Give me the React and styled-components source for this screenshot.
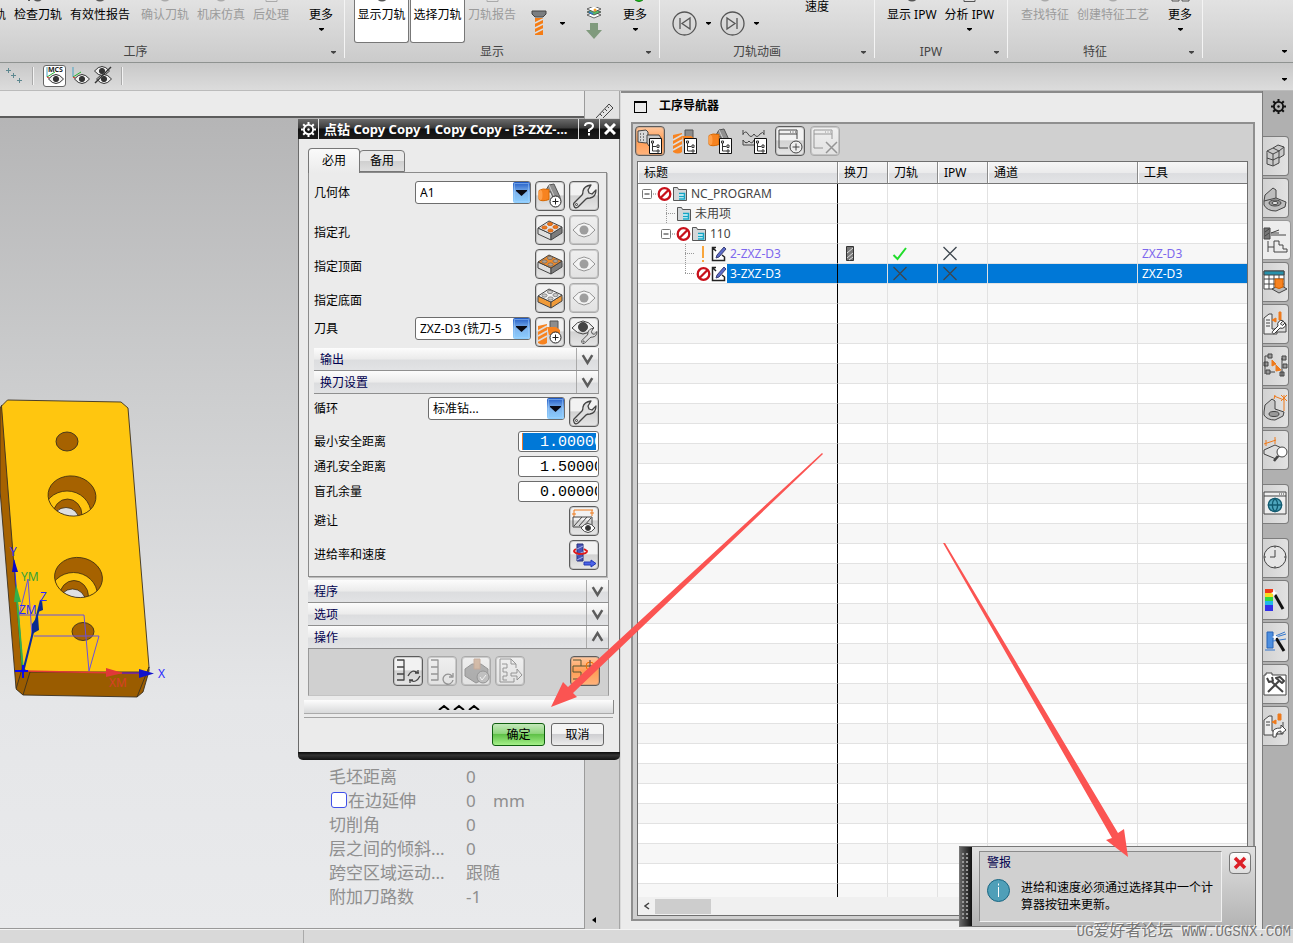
import React from "react";
import styled, { createGlobalStyle, css } from "styled-components";
import { Wrench, Globe } from "lucide-react";

const GlobalStyle = createGlobalStyle`
	* {
		box-sizing: border-box;
	}
	body {
		margin: 0;
		background: #d9d9d9;
		color: #000;
		font-family: "Noto Sans", "Noto Sans CJK SC", sans-serif;
		font-size: 12px;
		line-height: 16px;
	}
	button, input, select {
		font: inherit;
		color: inherit;
		margin: 0;
		padding: 0;
	}
	svg {
		display: block;
		flex: none;
	}
`;

const Page = styled.div`
	position: relative;
	display: flex;
	flex-direction: column;
	height: 100vh;
	overflow: hidden;
`;

/* ---------- ribbon ---------- */

const Ribbon = styled.header`
	display: flex;
	flex: none;
	height: 63px;
	background: linear-gradient(#e2e2e2, #cbcbcb);
	border-bottom: 1px solid #8f9391;
`;

const RibbonGroup = styled.section`
	position: relative;
	display: flex;
	flex-direction: column;
	justify-content: space-between;
	flex: none;
	width: ${(p) => p.$width}px;
	height: 58px;
	padding-left: ${(p) => p.$pad || 0}px;
	border-right: 1px solid #f4f4f4;
`;

const Commands = styled.div`
	display: flex;
	gap: ${(p) => p.$gap || 8}px;
	height: 42px;
`;

const Command = styled.button`
	display: flex;
	flex-direction: column;
	align-items: center;
	flex: none;
	border: 0;
	background: none;
	white-space: nowrap;
	color: ${(p) => (p.disabled ? "#9b9b9b" : "#000")};
	margin-left: ${(p) => p.$space || 0}px;

	svg:first-child {
		margin-bottom: 2px;
	}
	span + svg {
		margin-top: 5px;
	}
	${(p) =>
		p.$pressed &&
		css`
			width: 55px;
			height: 43px;
			background: #fff;
			border: 1px solid #777;
			border-top: 0;
			border-radius: 0 0 3px 3px;
		`}
`;

const GroupTitle = styled.div`
	height: 16px;
	margin: 0 0 -2px -${(p) => p.$pad || 0}px;
	padding-right: ${(p) => p.$end || 20}px;
	color: #444;
	line-height: 16px;
	text-align: center;
`;

const Launcher = styled.button`
	position: absolute;
	right: 8px;
	bottom: 4px;
	border: 0;
	background: none;
`;

const RibbonEnd = styled.div`
	flex: 1;
	display: flex;
	justify-content: flex-end;
	align-items: flex-end;
	padding: 0 6px 9px 0;
`;

const PlainButton = styled.button`
	display: flex;
	align-items: center;
	justify-content: center;
	border: 0;
	background: none;
`;

const Playback = styled.div`
	display: flex;
	align-items: center;
	gap: ${(p) => p.$gap}px;
	padding: 4px 0 0 ${(p) => p.$start || 0}px;
	height: 42px;
`;

const Stack = styled.div`
	display: flex;
	flex-direction: column;
	align-items: center;
	gap: 4px;
	height: ${(p) => p.$height || 32}px;
	margin-left: ${(p) => p.$space}px;
`;

const QuickBar = styled.nav`
	display: flex;
	align-items: center;
	height: 28px;
	flex: none;
	gap: 5px;
	padding: 0 6px 2px;
	background: linear-gradient(#c8c8c8, #dcdcdc);
	border-bottom: 1px solid #bbb;
`;

const QuickDivider = styled.span`
	width: 2px;
	height: 18px;
	margin: 0 4px;
	background: linear-gradient(90deg, #aaa 50%, #f2f2f2 50%);
`;

const QuickButton = styled(PlainButton)`
	width: ${(p) => (p.$pressed ? 23 : 18)}px;
	height: 22px;
	border: ${(p) => (p.$pressed ? "1px solid #666" : "0")};
	border-radius: 3px;
	background: ${(p) => (p.$pressed ? "#fff" : "none")};
`;

const QuickMore = styled(PlainButton)`
	margin-left: auto;
	padding-top: 8px;
`;

/* ---------- work area ---------- */

const Work = styled.main`
	display: grid;
	grid-template-columns: minmax(0, 620fr) minmax(0, 642fr) 31px;
	flex: 1;
	min-height: 0;
`;

const Left = styled.section`
	position: relative;
	display: flex;
	min-width: 0;
	min-height: 0;
`;

const CanvasColumn = styled.div`
	display: flex;
	flex-direction: column;
	flex: 1;
	min-width: 0;
	border-right: 1px solid #9b9b9b;
`;

const CanvasHeader = styled.div`
	height: 27px;
	flex: none;
	background: #ebebeb;
	border-bottom: 2px solid #5c5c5c;
`;

const Canvas = styled.div`
	display: flex;
	flex-direction: column;
	flex: 1;
	min-height: 0;
	padding-top: 272px;
	background: linear-gradient(#b5b5b6 0%, #cccdce 33%, #e5e6e8 72%, #e9eaec 100%);
	border-bottom: 1px solid #999;
`;

const Hud = styled.div`
	display: grid;
	grid-template-columns: 137px 27px 1fr;
	grid-auto-rows: 24px;
	margin-top: auto;
	padding: 0 0 19px 329px;
	font-size: 17px;
	line-height: 24px;
	color: #8f8f8f;
	white-space: nowrap;
`;

const HudCheck = styled.label`
	display: flex;
	align-items: center;
	gap: 1px;

	input {
		appearance: none;
		width: 16px;
		height: 16px;
		margin: 0 0 3px 2px;
		background: #fff;
		border: 1px solid #4050e8;
		border-radius: 3px;
	}
`;

const SideStrip = styled.div`
	display: flex;
	flex-direction: column;
	justify-content: space-between;
	width: 35px;
	background: #d0d0d0;
	border-right: 1px solid #a5a5a5;
`;

const RulerCorner = styled.div`
	display: flex;
	justify-content: center;
	align-items: flex-end;
	height: 27px;
	background: #e2e2e2;
	padding-left: 6px;
`;

const StripArrow = styled(PlainButton)`
	width: 18px;
	height: 19px;
`;

const StatusBar = styled.footer`
	display: flex;
	flex: none;
	height: 14px;
	background: #d9d9d9;
	border-top: 1px solid #f3f3f3;

	span {
		width: 304px;
		border-right: 1px solid #aaa;
	}
`;

/* ---------- dialog ---------- */

const Dialog = styled.section`
	position: absolute;
	top: 28px;
	right: 0;
	width: 322px;
	background: #ebebeb;
	border: 1px solid #6b6b6b;
	border-width: 0 1px;
	border-radius: 0 0 5px 5px;
`;

const TitleBar = styled.div`
	display: flex;
	height: 20px;
	margin: 0 -1px;
	color: #fff;
	background: linear-gradient(#6a6a6a, #3c3c3c 45%, #101010 50%, #1c1c1c);

	h2 {
		flex: 1;
		margin: 0;
		padding-left: 5px;
		font-size: 13px;
		line-height: 20px;
		white-space: nowrap;
		overflow: hidden;
	}
`;

const TitleButton = styled(PlainButton)`
	width: 21px;
	border-right: ${(p) => (p.$left ? "1px solid #ddd" : "0")};
	border-left: ${(p) => (p.$left ? "0" : "1px solid #ddd")};
`;

const DialogBody = styled.div`
	padding: 9px 10px 6px 9px;
`;

const Tabs = styled.div`
	display: flex;
	align-items: flex-end;
	height: 24px;
`;

const Tab = styled.button`
	width: ${(p) => (p.$active ? 52 : 46)}px;
	height: ${(p) => (p.$active ? 25 : 22)}px;
	margin-bottom: ${(p) => (p.$active ? -1 : 0)}px;
	margin-left: ${(p) => (p.$active ? 0 : -1)}px;
	position: relative;
	z-index: ${(p) => (p.$active ? 1 : 0)};
	border: 1px solid #777;
	border-bottom: ${(p) => (p.$active ? "0" : "1px solid #777")};
	border-radius: 4px 4px 0 0;
	background: ${(p) =>
		p.$active ? "linear-gradient(#fafafa, #ebebeb)" : "linear-gradient(#e9e9e9 50%, #cfcfcf 50%, #dedede)"};
	line-height: 20px;
`;

const TabPanel = styled.div`
	margin-right: 2px;
	padding: 8px 7px 6px 5px;
	border: 1px solid #8b8b8b;
	box-shadow: 1px 1px 0 #bbb;
`;

const Rows = styled.div`
	display: grid;
	gap: 4px;
	margin-top: ${(p) => p.$top || 0}px;
`;

const Row = styled.div`
	display: flex;
	align-items: flex-start;
	gap: 4px;

	> label, > span {
		flex: 1;
		padding-top: ${(p) => (p.$low ? 10 : p.$mid ? 7 : 4)}px;
	}
	> input {
		flex: none;
	}
`;

const DistanceRow = styled(Row)`
	> label {
		padding-top: 3px;
	}
`;

const ToolButton = styled.button`
	display: flex;
	flex: none;
	width: 30px;
	height: 30px;
	overflow: hidden;
	border: 1px solid ${(p) => (p.disabled ? "#aaa" : "#5c5c5c")};
	border-radius: 4px;
	background: ${(p) =>
		p.$hot
			? "linear-gradient(#ffc79d, #ff9d55 50%, #ffb37c)"
			: p.disabled
			? "linear-gradient(#efefef, #e2e2e2)"
			: "linear-gradient(#f2f2f2 45%, #d2d2d2 50%, #e6e6e6)"};
	box-shadow: inset 0 0 0 1px rgba(120, 120, 120, 0.3);

	svg {
		opacity: ${(p) => (p.disabled ? 0.5 : 1)};
	}
`;

const ComboBox = styled.div`
	position: relative;
	width: ${(p) => p.$width}px;
	height: 23px;

	select {
		appearance: none;
		width: 100%;
		height: 23px;
		padding: 0 20px 0 4px;
		background: #fff;
		border: 1px solid #6d6d6d;
		border-radius: 3px;
	}
	svg {
		position: absolute;
		top: 1px;
		right: 1px;
		pointer-events: none;
	}
`;

const NumberField = styled.input`
	width: 81px;
	height: 21px;
	padding: 2px 1px 0 21px;
	border: 1px solid #6d6d6d;
	border-radius: 3px;
	font-family: "Liberation Mono", monospace;
	font-size: 15px;
	line-height: 17px;
	color: ${(p) => (p.$selected ? "#fff" : "#000")};
	background: ${(p) =>
		p.$selected
			? "linear-gradient(90deg, #e87a30 1px, #0078d7 1px) 3px 1px / 74px 17px no-repeat #fff"
			: "#fff"};
`;

const Bar = styled.button`
	display: flex;
	align-items: center;
	width: 100%;
	height: 23px;
	border: 0;
	border-bottom: 1px solid #8f8f8f;
	border-right: 1px solid #999;
	background: linear-gradient(#fcfcfc, #ebebeb 50%, #dcdddf 55%, #e2e3e5);
	color: #00004e;
	text-align: left;

	span {
		flex: 1;
		padding: 2px 0 0 6px;
	}
	svg {
		border-left: 1px solid #aaa;
	}
`;

const BarList = styled.div`
	margin-top: ${(p) => p.$top}px;
`;

const Actions = styled.div`
	display: flex;
	gap: 4px;
	height: 47px;
	padding: 7px 8px 0 84px;
	background: #d0d0d0;
	border: 1px solid #9a9a9a;
	border-top: 0;
	border-bottom-color: #c4c4c4;

	button:last-child {
		margin-left: auto;
	}
`;

const Collapse = styled.button`
	display: flex;
	justify-content: center;
	align-items: center;
	width: calc(100% + 9px);
	height: 14px;
	margin: 4px -5px 3px -4px;
	border: 0;
	border-bottom: 1px solid #aaa;
	border-right: 1px solid #888;
	background: linear-gradient(#fdfdfd, #d8d9da);
`;

const Footer = styled.div`
	display: flex;
	justify-content: flex-end;
	gap: 6px;
	padding: 5px 9px 0 0;
	border-top: 1px solid #a2a2a2;
	margin: 0 -4px 0 -4px;
`;

const PushButton = styled.button`
	width: 53px;
	height: 23px;
	border: 1px solid ${(p) => (p.$primary ? "#0f5e0f" : "#666")};
	border-radius: 3px;
	background: ${(p) =>
		p.$primary
			? "linear-gradient(#c4e8bb, #8fd67d 45%, #5fc148 50%, #a5f089)"
			: "linear-gradient(#f4f4f4 45%, #cfcfd2 50%, #ececec)"};
`;

const DialogFoot = styled.div`
	height: 8px;
	margin: 0 -1px;
	background: linear-gradient(#0a0a0a, #333 40%, #111);
	border-radius: 0 0 5px 5px;
`;

/* ---------- operation navigator ---------- */

const Navigator = styled.section`
	display: flex;
	flex-direction: column;
	min-width: 0;
	min-height: 0;
	padding: 0 7px 8px 10px;
	margin-left: 1px;
	background: #ebebeb;
	border-top: 2px solid #8a8a8a;
`;

const NavHeader = styled.div`
	display: flex;
	align-items: center;
	gap: 12px;
	height: 29px;
	padding: 0 0 3px 3px;

	h2 {
		margin: 0;
		font-size: 12px;
		line-height: 16px;
	}
`;

const PinBox = styled.button`
	width: 13px;
	height: 12px;
	border: 1px solid #000;
	border-top-width: 2px;
	background: none;
	margin-top: 2px;
`;

const NavBody = styled.div`
	display: flex;
	flex-direction: column;
	flex: 1;
	min-height: 0;
	padding: 2px 5px 3px 4px;
	background: #d0d0d0;
	border: 2px solid #8f8f8f;
`;

const NavTools = styled.div`
	display: flex;
	align-items: center;
	height: 30px;
	margin: 0 0 5px -2px;
	gap: 5px;
`;

const FlatTool = styled(PlainButton)`
	width: 30px;
	height: 30px;
`;

const Sheet = styled.div`
	display: flex;
	flex-direction: column;
	flex: 1;
	min-height: 0;
	background: #fff;
	border: 1px solid #6f6f6f;
`;

const SheetScroll = styled.div`
	flex: 1;
	min-height: 0;
	overflow: hidden;
`;

const Table = styled.table`
	width: 100%;
	table-layout: fixed;
	border-collapse: separate;
	border-spacing: 0;
	white-space: nowrap;

	th {
		height: 22px;
		padding: 1px 0 0 6px;
		font-weight: 400;
		text-align: left;
		background: linear-gradient(#f6f6f6, #ebebec 50%, #dcdde0 55%, #e3e4e6);
		border-right: 1px solid #8a8a8a;
		border-bottom: 1px solid #777;
		box-shadow: inset 1px 0 0 #fff;
	}
	td {
		height: 20px;
		padding: 0;
		border-right: 1px solid #e2e2e2;
		border-bottom: 1px solid #e2e2e2;
		overflow: hidden;
	}
	td:first-child {
		border-right-color: #000;
	}
	th:last-child, td:last-child {
		border-right: 0;
	}
`;

const Line = styled.tr`
	background: ${(p) => (p.$odd ? "#f7f7f7" : "#fff")};
	color: ${(p) => (p.$selected ? "#fff" : "#7d68ee")};

	td:not(:first-child) {
		padding-left: 4px;
		background: ${(p) => (p.$selected ? "#0078d7" : "transparent")};
	}
`;

const TreeCell = styled.div`
	display: flex;
	align-items: center;
	height: 19px;
	padding-left: ${(p) => p.$indent || 0}px;
`;

const TreeText = styled.span`
	flex: 1;
	padding-left: 3px;
	line-height: 19px;
	color: ${(p) => (p.$selected ? "#fff" : p.$done ? "#7d68ee" : "#444")};
	background: ${(p) => (p.$selected ? "#0078d7" : "transparent")};
`;

const ScrollTrack = styled.div`
	display: flex;
	align-items: center;
	height: 18px;
	background: #f0f0f0;

	button {
		width: 17px;
		height: 17px;
	}
	span {
		width: 56px;
		height: 15px;
		background: #cdcdcd;
	}
`;

/* ---------- resource rail ---------- */

const Rail = styled.nav`
	display: flex;
	flex-direction: column;
	gap: 2px;
	background: #b0b0b0;
	border-left: 1px solid #7b7b7b;
`;

const RailGear = styled(PlainButton)`
	height: 31px;
	margin-bottom: 12px;
`;

const RailTab = styled.button`
	display: flex;
	align-items: center;
	flex: none;
	width: ${(p) => (p.$active ? 28 : 26)}px;
	height: 40px;
	margin-top: ${(p) => p.$space || 0}px;
	border: 1px solid ${(p) => (p.$active ? "#999" : "#7d7d7d")};
	border-left: 0;
	border-radius: 0 4px 4px 0;
	background: ${(p) => (p.$active ? "#ededed" : "linear-gradient(90deg, #d2d2d2, #e2e2e2)")};
`;

/* ---------- alert ---------- */

const Alert = styled.aside`
	position: absolute;
	right: 37px;
	bottom: 16px;
	display: flex;
	width: 297px;
	height: 81px;
	background: linear-gradient(#e0e0e0, #b4b4b4);
	border: 1px solid #777;
`;

const AlertGrip = styled.div`
	width: 12px;
	background: linear-gradient(90deg, #666, #111);

	svg {
		margin: 6px 0 0 2px;
	}
`;

const AlertBox = styled.div`
	flex: 1;
	margin: 4px 7px;
	padding: 3px 7px 0;
	background: #d0d0d0;
	border: 1px solid #f0f0f0;
	border-top-color: #8a8a8a;
	border-left-color: #8a8a8a;

	h3 {
		margin: 0 0 8px;
		font-size: 12px;
		font-weight: 400;
		line-height: 16px;
		color: #00004e;
	}
	div {
		display: flex;
		gap: 11px;
	}
	p {
		margin: 0 -6px 0 0;
		line-height: 17px;
	}
`;

const AlertClose = styled(PlainButton)`
	width: 22px;
	height: 22px;
	margin: 5px 4px 0 0;
	border: 1px solid #777;
	border-radius: 4px;
	background: linear-gradient(#fff, #ddd);
`;

const Watermark = styled.div`
	position: absolute;
	right: 2px;
	bottom: 1px;
	display: flex;
	align-items: baseline;
	font-family: "Liberation Mono", "Noto Sans CJK SC", monospace;
	font-size: 14px;
	line-height: 20px;
	color: #777;
	text-shadow: -1px -1px 0 #f5f5f5;
	white-space: pre;
	pointer-events: none;

	b {
		font-size: 16px;
		font-weight: 400;
	}
`;

const Annotations = styled.svg`
	position: absolute;
	inset: 0;
	width: 100%;
	height: 100%;
	pointer-events: none;
`;

/* ---------- drawings ---------- */

const Caret = ({ color = "#000" }) => (
	<svg width="5" height="3" viewBox="0 0 5 3">
		<path d="M0 0h5v1L2.500 3 0 1z" fill={color} />
	</svg>
);

const Gear = ({ color }) => (
	<svg width="15" height="15" viewBox="0 0 15 15" fill="none" stroke={color}>
		<circle cx="7.500" cy="7.500" r="4.600" strokeWidth="1.800" />
		<path
			d="M7.500 0v3M7.500 12v3M0 7.500h3M12 7.500h3M2.200 2.200l2 2M10.800 10.800l2 2M12.800 2.200l-2 2M4.200 10.800l-2 2"
			strokeWidth="2"
		/>
		<circle cx="7.500" cy="7.500" r="1.200" fill={color} stroke="none" />
	</svg>
);

const Sliver = ({ kind, color = "#555" }) => (
	<svg width="30" height="5" viewBox="0 0 30 5" fill="none" stroke={color}>
		{kind === "box" && <path d="M10 0v1.500h11V0" />}
		{kind === "round" && <path d="M10 -2q5 5 10 0" strokeWidth="2" />}
		{kind === "loop" && <path d="M5 0h2M10 -2q5 5 9 0" strokeWidth="2" />}
		{kind === "green" && <path d="M13 -2q6 7 12 0z" fill="#1fc51f" stroke="#137a13" />}
		{kind === "cubes" && <path d="M7 0v1h7V0M17 0v1h7V0" />}
	</svg>
);

const Step = ({ back }) => (
	<svg width="25" height="25" viewBox="0 0 25 25" fill="none" stroke="#555" strokeWidth="1.300">
		<circle cx="12.500" cy="12.500" r="11.500" />
		{back ? <path d="M8 7v11M18 7v11l-8-5.500z" /> : <path d="M17 7v11M7 7v11l8-5.500z" />}
	</svg>
);

const DrillIcon = () => (
	<svg width="16" height="26" viewBox="0 0 16 26">
		<path d="M1 1h14v3l-3 3H4L1 4z" fill="#7a7d80" stroke="#444" />
		<path d="M4 8h8v17H4z" fill="#f57c14" />
		<path d="M4 13l8-4M4 18l8-4M4 23l8-4" stroke="#ddd" strokeWidth="1.500" />
	</svg>
);

const LayersIcon = () => (
	<svg width="16" height="12" viewBox="0 0 16 12" fill="#fff" stroke="#444" strokeWidth="0.800">
		<path d="M1 8l7-3 7 3-7 3z" />
		<path d="M1 5l7-3 7 3-7 3z" fill="#59bd6a" />
		<path d="M1 2l7-3 7 3-7 3z" fill="#fff" />
		<circle cx="9" cy="3" r="1.500" fill="#f7a020" stroke="none" />
		<path d="M3 5l4 2" stroke="#3477cc" strokeWidth="1.500" />
	</svg>
);

const DownIcon = () => (
	<svg width="16" height="16" viewBox="0 0 16 16">
		<path d="M4 0h8v7h4l-8 9-8-9h4z" fill="#809a7d" />
	</svg>
);

const CrossesIcon = () => (
	<svg width="17" height="17" viewBox="0 0 17 17" stroke="#5d8890" strokeWidth="1">
		<path d="M0 3.500h5M2.500 1v5M5 8.500h5M7.500 6v5M11 13.500h5M13.500 11v5" />
	</svg>
);

const EyeShape = ({ x = 0, y = 0, color = "#333" }) => (
	<g transform={`translate(${x} ${y})`} fill="none" stroke={color}>
		<path d="M-7.500 0q7.500 -9 15 0q-7.500 9 -15 0z" fill="#eee" />
		<circle r="2.600" fill={color} />
	</g>
);

const AxisEye = ({ label }) => (
	<svg width="19" height="19" viewBox="0 0 19 19">
		<path d="M2 1v10" stroke="#4aa3c4" />
		<path d="M2 11l8-5" stroke="#26b32e" />
		<path d="M2 11l4 2" stroke="#e02020" />
		{label && (
			<text x="3" y="6" fontSize="7" fontWeight="700" fill="#222">
				MCS
			</text>
		)}
		<EyeShape x={11} y={13} />
	</svg>
);

const HideEye = () => (
	<svg width="18" height="19" viewBox="0 0 18 19">
		<EyeShape x={8} y={5} />
		<EyeShape x={10} y={13} />
		<path d="M1 17L17 1" stroke="#333" strokeWidth="1.500" />
	</svg>
);

const RulerIcon = () => (
	<svg width="18" height="15" viewBox="0 0 18 15" fill="none" stroke="#444">
		<path d="M0 15L13 1l4 4L7 15M4 11l2 2M6.500 8.500l1.500 1.500M9 6l2 2M11.500 3.500l1.500 1.500" />
	</svg>
);

const ComboArrow = () => (
	<svg width="17" height="21" viewBox="0 0 17 21">
		<defs>
			<linearGradient id="combo" x1="0" y1="0" x2="0" y2="1">
				<stop offset="0" stopColor="#1e58c4" />
				<stop offset="0.500" stopColor="#7fb4ee" />
				<stop offset="1" stopColor="#8ccfff" />
			</linearGradient>
		</defs>
		<rect width="17" height="21" rx="2" fill="url(#combo)" />
		<rect x="1.500" y="1.500" width="14" height="18" fill="none" stroke="#a5d2fb" strokeOpacity="0.500" />
		<path d="M3 8h11v1l-5.500 5L3 9z" fill="#0a0a14" />
	</svg>
);

const Chevron = ({ up }) => (
	<svg width="22" height="22" viewBox="0 0 22 22" fill="none" stroke="#5c5c5c" strokeWidth="2.600">
		<path d={up ? "M6 15l5-8 5 8" : "M6 7l5 8 5-8"} />
	</svg>
);

// every toolbar drawing shares the inside of a 30px button
const Glyph = ({ children }) => (
	<svg width="28" height="28" viewBox="1 1 28 28" fill="none" stroke="#444" strokeLinejoin="round">
		{children}
	</svg>
);

const PlusBadge = () => (
	<g stroke="#222">
		<circle cx="20.500" cy="20.500" r="5.500" fill="#fff" />
		<path d="M17.500 20.500h6M20.500 17.500v6" />
	</g>
);

const TreeBadge = () => (
	<g stroke="#333">
		<path d="M14.500 12.500h12v15h-12z" fill="#fff" stroke="#111" />
		<path d="M17.500 17v8h4M17.500 20.500h4M22 19h2v2.500h-2zM22 24h2v2h-2zM16.500 15h2v2h-2z" />
	</g>
);

const GeometryShape = () => (
	<g>
		<path d="M11 9l3-5 5-1 6 13v4h-5l-5-10-2 3z" fill="#8f8f8f" stroke="#555" />
		<path d="M14 4l6 13" stroke="#ccc" />
		<path d="M4 9.500q3-2.500 10-1v10q-7 2.500-10 0z" fill="#f78320" stroke="#d86800" />
		<ellipse cx="5.500" cy="14" rx="2" ry="5" fill="#ffa04a" stroke="none" />
	</g>
);

const ToolShape = () => (
	<g stroke="none">
		<path d="M15 4h8v9h-8z" fill="#8d8d8d" stroke="#555" />
		<path d="M12 10h9l4 3v5H14z" fill="#f78320" />
		<path d="M3 9l9-2v19q-4 3-9 0z" fill="#f78320" />
		<path d="M3 14l9-5M3 19l9-5M3 24l9-5" stroke="#ddd" strokeWidth="1.500" />
	</g>
);

const Block = ({ top, dots, side }) => (
	<Glyph>
		<path d="M3 13v6l13 6v-6z" fill={side || "#dedede"} />
		<path d="M27 12v6l-11 7v-6z" fill={side || "#7c7c7c"} />
		<path d="M3 13l11-7 13 6-11 7z" fill={top} />
		<g fill={dots} stroke={dots === "#f07818" ? "#c95000" : "#666"} strokeWidth="0.700">
			<ellipse cx="15" cy="9" rx="2.600" ry="1.600" />
			<ellipse cx="9.500" cy="12.500" rx="2.600" ry="1.600" />
			<ellipse cx="20.500" cy="12" rx="2.600" ry="1.600" />
			<ellipse cx="15.500" cy="15.500" rx="2.600" ry="1.600" />
		</g>
	</Glyph>
);

const EyeGlyph = () => (
	<Glyph>
		<path d="M4 15q11-14 22 0q-11 14-22 0z" fill="#fff" />
		<circle cx="15" cy="15" r="4.500" fill="#555" stroke="none" />
	</Glyph>
);

const WrenchShape = () => (
	<g>
		<path
			d="M5 22l8-8q1-1 1-4q1-5 8-6l-3 5 1 3 3 1 4-4q0 7-6 8q-3 0-4 1l-8 8q-3 2-4-1q-1-2 0-3z"
			fill="#dedede"
			strokeWidth="1.300"
		/>
		<circle cx="7.500" cy="23.500" r="1" />
	</g>
);

const WrenchGlyph = () => (
	<Glyph>
		<WrenchShape />
	</Glyph>
);

const GeometryGlyph = ({ tree }) => (
	<Glyph>
		<GeometryShape />
		{tree ? <TreeBadge /> : <PlusBadge />}
	</Glyph>
);

const ToolGlyph = ({ tree }) => (
	<Glyph>
		<ToolShape />
		{tree ? <TreeBadge /> : <PlusBadge />}
	</Glyph>
);

const EyeWrenchGlyph = () => (
	<Glyph>
		<path d="M3 11q11-14 22 0q-11 12-22 0z" />
		<circle cx="14" cy="10" r="4.500" fill="#444" />
		<g transform="translate(9.500 8.500) scale(0.680)">
			<WrenchShape />
		</g>
	</Glyph>
);

const AvoidGlyph = () => (
	<Glyph>
		<path d="M5 4h19M5 4v7M23 4v6M3 8h4M21 7h4" stroke="#ee7a1c" />
		<path d="M4 11h19v10H4zM5 20l8-9M10 20l8-9M15 20l7-8" />
		<g transform="translate(19 22)">
			<path d="M-7 0q7-9 14 0q-7 9-14 0z" fill="#fff" />
			<circle r="2.500" fill="#333" />
		</g>
	</Glyph>
);

const FeedGlyph = () => (
	<Glyph>
		<path d="M8 4h6v17H8z" fill="#4854b8" stroke="#26307c" />
		<path d="M8 9l6-3M8 15l6-3M8 20l6-3" stroke="#a9b0ea" />
		<path d="M7 9q-5 3 3 5q8 0 8-3l-3-2" stroke="#e01c1c" strokeWidth="2" />
		<path d="M15 22h7v-2l5 3.500-5 3.500v-2h-7z" fill="#4b63e8" stroke="#2238b4" />
	</Glyph>
);

const GenerateGlyph = ({ single }) => (
	<Glyph>
		<path d="M4 4h7v7H4M4 18h7v-7M4 11h7M4 18h7v6H4" strokeWidth="1.300" />
		{single ? (
			<path d="M26 17v4h-4M25 20a5 5 0 1 0 1 4" strokeWidth="1.300" />
		) : (
			<path d="M15 20q4-8 10-3v-3M26 17h-4M27 20q-4 8-10 4v3M16 24h4" strokeWidth="1.300" />
		)}
	</Glyph>
);

const VerifyGlyph = () => (
	<Glyph>
		<path d="M4 13l7-5h9l7 5v8l-12 6L4 20z" fill="#777" />
		<path d="M13 3h6v10h-6z" fill="#b98a64" stroke="#a07050" />
		<circle cx="22" cy="21" r="6" fill="#999" />
		<path d="M19 21l2 3 4-5" stroke="#fff" />
	</Glyph>
);

const OutputGlyph = () => (
	<Glyph>
		<path d="M5 3h11l5 5v4M5 3v23h14v-4M16 3v5h5" />
		<path d="M7 8h5v4H8v4h4v4H8v4h4M16 17h6v-4l5 6-5 5v-4h-6z" />
	</Glyph>
);

const DisplayGlyph = () => (
	<Glyph>
		<path d="M3 4h8v6H3v6h8v7H3M11 10h16" stroke="#553" />
		<circle cx="20" cy="10" r="4" stroke="#ee7000" />
		<path d="M20 4v12" />
	</Glyph>
);

const ProgramGlyph = () => (
	<Glyph>
		<path d="M3 5l8-1 2 2v10l-2 1-8-1z" fill="#d9d9d9" />
		<path d="M5 8h1M8 8h1M5 11h1M8 11h1M5 14h1M8 14h1" stroke="#222" />
		<path d="M12 9h12l2 3v8H14l-2-3z" fill="#c9c9c9" />
		<TreeBadge />
	</Glyph>
);

const MethodGlyph = () => (
	<Glyph>
		<path d="M3 4v5M24 4v5M3 8q3-4 5 0q3 5 6 0q3 5 6 0q3-3 4 0M3 14v5M3 14q3 5 6 1q3 4 5-1M3 19h11" />
		<TreeBadge />
	</Glyph>
);

const WindowGlyph = ({ remove }) => (
	<Glyph>
		<path d="M13 22H4V4h18v9M4 8h18M15 6h1M17.500 6h1M20 6h1" />
		{remove ? <path d="M16 16l11 11M27 16L16 27" strokeWidth="1.500" /> : <circle cx="21" cy="21" r="6" fill="#eee" />}
		{!remove && <path d="M17.500 21h7M21 17.500v7" />}
	</Glyph>
);

const Forbidden = () => (
	<svg width="15" height="16" viewBox="0 0 15 16" fill="#fff" stroke="#c8101a" strokeWidth="2.300">
		<circle cx="7.500" cy="8" r="5.800" />
		<path d="M3.500 12l8-8" />
	</svg>
);

const Folder = () => (
	<svg width="16" height="16" viewBox="0 0 16 16">
		<path d="M1.500 14.500v-13h4l1 2h8v11z" fill="#d4d7d9" stroke="#555" />
		<path d="M7 7h6v7H7" fill="#e8fbff" />
		<path d="M7 7.500h5.500v5.500H7M7 10.500h5" stroke="#16a5c4" strokeWidth="1.500" fill="none" />
	</svg>
);

const EditIcon = () => (
	<svg width="16" height="17" viewBox="0 0 16 17" fill="none" stroke="#222">
		<path d="M5 2.500H1.500v13h12V12L11 10M1.500 2.500L5 6" fill="#fff" strokeWidth="1.500" />
		<path d="M13 2L6 10l-1 3 3-1 7-8z" fill="#5b6bc8" stroke="#3a3f78" />
	</svg>
);

const Exclaim = () => (
	<svg width="15" height="16" viewBox="0 0 15 16" fill="#f9a63c">
		<path d="M6 0h2v12H6zM6 14h2v2H6z" />
	</svg>
);

const Guide = ({ width, x, half }) => (
	<svg width={width} height="19" viewBox={`0 0 ${width} 19`} stroke="#999" strokeDasharray="1 1">
		<path d={`M${x + 0.5} 0v${half ? 10 : 19}M${x} 9.500h9`} />
	</svg>
);

const Expander = () => (
	<PlainButton aria-label="折叠">
		<svg width="15" height="19" viewBox="0 0 15 19" fill="#fff" stroke="#777">
			<rect x="0.500" y="5.500" width="9" height="9" rx="1" />
			<path d="M2.500 10h5" stroke="#222" />
			<path d="M11 10h4" strokeDasharray="1 1" />
		</svg>
	</PlainButton>
);

const CrossMark = () => (
	<svg width="17" height="17" viewBox="0 0 17 17" stroke="#3d464e" strokeWidth="1.300">
		<path d="M1.500 2l13 13M14.500 2l-13 13" />
	</svg>
);

const CheckMark = () => (
	<svg width="17" height="17" viewBox="0 0 17 17" fill="none" stroke="#21dd2c" strokeWidth="2">
		<path d="M1.500 10l4 4L14 3" />
	</svg>
);

const ToolMark = () => (
	<svg width="17" height="17" viewBox="0 0 17 17">
		<path d="M4.500 1.500h7v14h-7z" fill="#777" stroke="#333" />
		<path d="M5 8l6-5M5 13l6-5M7 15l4-3" stroke="#ddd" />
	</svg>
);

// drawings on the resource tabs
const railArt = {
	assembly: (
		<g fill="#c9c9c9">
			<path d="M4 9l6-3 5-3 6 2v8l-5 3v5l-6 3-6-2z" />
			<path d="M4 9l6 3v12M10 12l6-3 5-4M10 6l6 3v7M4 16l6 2 6-3" />
		</g>
	),
	part: (
		<g fill="#bdbdbd">
			<path d="M1 17l1-6 8-7 3 2v8l10 4-1 5-9 4q-9 0-12-6z" />
			<path d="M1 17l12-3" />
			<ellipse cx="12" cy="19" rx="6" ry="3" fill="#999" />
			<ellipse cx="12" cy="19" rx="3" ry="1.500" fill="#eee" />
		</g>
	),
	operations: (
		<g>
			<path d="M1 2h6v11H1z" fill="#777" />
			<path d="M2 6l4-3M2 10l4-3M8 7l8-3M8 9h15M8 7l8 0M5 15v11M5 21h6M11 26V15h5v4h4v4h4v3z" />
		</g>
	),
	table: (
		<g>
			<path d="M1 3h20v18H1z" fill="#fff" />
			<path d="M1 3h20v4H1z" fill="#2790aa" />
			<path d="M1 11h20M1 16h20M6 7v14M11 7v14M16 7v14" />
			<path d="M9 21l7 4 8-4-7-4z" fill="#bbb" />
			<path d="M12 11h8v8q-4 3-8 0z" fill="#f78320" stroke="#d06000" />
		</g>
	),
	machine: (
		<g>
			<path d="M1 8l5-4h3v15h5v5H1z" fill="#eee" />
			<path d="M3 10h4M3 13h4M3 16h4M10 22h13v-8l-3-3" fill="#ddd" />
			<path d="M9 10l4-2v4zM16 2h2v8h-2z" stroke="#ee7a1c" fill="#ee7a1c" />
			<Wrench x="8" y="9" width="16" height="16" strokeWidth={1.500} color="#333" fill="#fff" />
		</g>
	),
	links: (
		<g fill="#999">
			<path d="M5 2h4v4H5zM3 18h4v4H3zM19 4h4v4h-4zM17 20h4v4h-4zM1 10h4v4H1zM20 12h4v4h-4z" />
			<path d="M5 4H2v18M19 6v18M7 20h5" fill="none" />
			<path d="M9 8l4 4-4 2zM13 13l5 5-5 1z" stroke="#ee7a1c" fill="#ee7a1c" />
		</g>
	),
	measure: (
		<g fill="#c9c9c9">
			<path d="M1 18l1-7 7-6 3 2v8l9 3-1 4-8 4q-8 0-11-5z" />
			<ellipse cx="11" cy="20" rx="5" ry="2.500" fill="#999" />
			<path d="M11 2l10 4M12 1l-1 4M21 1v16M18 1l6 6M24 1l-6 6" stroke="#ee7a1c" fill="none" />
		</g>
	),
	inspect: (
		<g fill="#ddd">
			<path d="M1 14l11-5 11 5-10 9-12-5z" />
			<path d="M1 8l12-4M3 4v6M12 1v7" stroke="#ee7a1c" fill="none" />
			<circle cx="19" cy="16" r="5" fill="#fff" />
			<path d="M15 20l-4 5" strokeWidth="2.500" />
		</g>
	),
	web: (
		<g>
			<path d="M1 2h22v22H1z" fill="#eee" />
			<path d="M1 6h22M16 4h1M18 4h1M20 4h1" />
			<Globe x="4" y="7" width="16" height="16" color="#125b70" fill="#4fa6be" />
		</g>
	),
	history: (
		<g>
			<circle cx="12" cy="13" r="11" fill="#e5e5e5" />
			<path d="M12 6v7H7M12 2v2M12 22v2M1 13h2M21 13h2" />
		</g>
	),
	colors: (
		<g stroke="none">
			<path d="M2 3h8v4H2z" fill="#f03a18" />
			<path d="M2 7h8v4H2z" fill="#f9dc20" />
			<path d="M2 11h8v4H2z" fill="#32d842" />
			<path d="M2 15h8v4H2z" fill="#22b7e8" />
			<path d="M2 19h8v6H2z" fill="#3430e8" />
			<path d="M12 9l8 14" stroke="#111" strokeWidth="3" />
			<path d="M11 3l1 3 3 1-3 1-1 3-1-3-2-1 2-1z" fill="#fff" />
		</g>
	),
	wizard: (
		<g>
			<path d="M4 4h6v16H4z" fill="#4d8fe0" stroke="#2865b8" />
			<path d="M10 10l13-4M10 13l13-2M10 9l12-5M2 22h10" stroke="#3477cc" />
			<path d="M13 10l8 13" stroke="#111" strokeWidth="3" />
			<path d="M12 5l1 3 3 1-3 1-1 3-1-3-2-1 2-1z" fill="#fff" stroke="none" />
		</g>
	),
	tools: (
		<g>
			<path d="M1 5h2V3h6v2h14v20H1z" fill="#fff" />
			<path d="M5 22L16 11M13 8l4-1 4 4-2 2z" strokeWidth="2" />
			<path d="M20 22L9 12M4 8l2 4 4-1-1-4" strokeWidth="2" />
		</g>
	),
	export: (
		<g>
			<path d="M1 8l5-4h3v15h5v4H1z" fill="#eee" />
			<path d="M3 10h4M3 13h4M20 10v12h-7" fill="none" />
			<path d="M9 10l4-2v4zM15 2h3v6h-3z" stroke="#ee7a1c" fill="#ee7a1c" />
			<path d="M10 25v-5q0-4 8-4v-3l5 5-5 4v-3q-5 0-5 6z" fill="#fff" />
		</g>
	),
};

const railTabs = [
	["assembly", "装配导航器"],
	["part", "部件导航器"],
	["operations", "工序导航器"],
	["table", "机床导航器"],
	["machine", "加工特征"],
	["links", "约束导航器"],
	["measure", "测量"],
	["inspect", "检查"],
	["web", "浏览器", 12],
	["history", "历史记录", 12],
	["colors", "系统材料"],
	["wizard", "加工向导"],
	["tools", "角色"],
	["export", "导出"],
];

const Hole = ({ shift, id }) => (
	<g transform={shift} stroke="#3a2a10" strokeWidth="0.800">
		<clipPath id={id}>
			<ellipse cx="72" cy="496" rx="24" ry="20" transform="rotate(8 72 496)" />
		</clipPath>
		<g clipPath={`url(#${id})`}>
			<path d="M40 470h60v50H40z" fill="#a66200" stroke="none" />
			<ellipse cx="67" cy="514" rx="24" ry="23" fill="#ffc60f" />
			<ellipse cx="67.500" cy="515" rx="14.500" ry="16" fill="#a66200" />
			<ellipse cx="66" cy="520" rx="13" ry="12.500" fill="#dfe0e2" />
		</g>
		<ellipse cx="72" cy="496" rx="24" ry="20" transform="rotate(8 72 496)" fill="none" />
	</g>
);

const PartModel = () => (
	<svg width="180" height="320" viewBox="0 390 180 320">
		<g stroke="#3a3020" strokeWidth="0.900">
			<path d="M0 408l2-3 21 264-1 25-6-6L0 490z" fill="#a66200" />
			<path d="M1.500 406l6-6 113.500 2 7 6 21 259-2 6-117-1-8-3z" fill="#ffc60f" />
			<path d="M22 669l8 3h117l2-5v4l-6 21-6 5-114-2-7-6z" fill="#9a5c00" />
			<path d="M30 672l-7 23M147 672l-10 25" />
			<ellipse cx="67" cy="441.500" rx="11" ry="9.500" fill="#a66200" />
			<ellipse cx="83" cy="631.500" rx="11" ry="9" fill="#a66200" />
		</g>
		<Hole id="bore-a" />
		<Hole id="bore-b" shift="translate(6.500 81.500)" />
		<g fill="none" stroke="#6a50e0">
			<path d="M34 636h65l-10 35-5-56H19l9-36 4 57" />
		</g>
		<path d="M23 671L14 560" stroke="#2a2aff" />
		<path d="M23 671L17 600" stroke="#35b04a" strokeWidth="2" />
		<path d="M16 584l5 18h-7z" fill="#35b04a" />
		<path d="M14 559l4 13h-6z" fill="#0808c8" />
		<path d="M23 672l18-72" stroke="#0a2aa0" strokeWidth="2" />
		<path d="M38 616l1 14-7 4v-10zM42 600l1 10-5 2z" fill="#0a2a90" />
		<path d="M23 671l120 2.500" stroke="#e03838" strokeWidth="1.500" />
		<path d="M106 668l17 5-17 4z" fill="#e03838" />
		<path d="M122 673h22" stroke="#2020e0" />
		<path d="M139 669l15 4.500-15 4.500z" fill="#1212cc" />
		<path d="M15 671h13M23 665v13" stroke="#0a0af0" strokeWidth="2" />
		<g fontSize="12" fill="#2a2aff">
			<text x="10" y="556">Y</text>
			<text x="40" y="601">Z</text>
			<text x="19" y="614">ZM</text>
			<text x="158" y="678">X</text>
			<text x="21" y="581" fill="#35a03a">YM</text>
			<text x="109" y="687" fill="#d84028">XM</text>
		</g>
	</svg>
);

/* ---------- pieces ---------- */

const Cmd = ({ label, icon = "round", drop, ...rest }) => (
	<Command {...rest}>
		<Sliver kind={icon} color={rest.disabled ? "#aaa" : "#555"} />
		<span>{label}</span>
		{drop && <Caret />}
	</Command>
);

const Combo = ({ id, width, value }) => (
	<ComboBox $width={width}>
		<select id={id} defaultValue={value}>
			<option>{value}</option>
		</select>
		<ComboArrow />
	</ComboBox>
);

const Section = ({ label, open }) => (
	<Bar aria-expanded={!!open}>
		<span>{label}</span>
		<Chevron up={open} />
	</Bar>
);

const planes = [
	{ label: "指定孔", top: "#e2e2e2", dots: "#f07818" },
	{ label: "指定顶面", top: "#f08a28", dots: "#b0a090" },
	{ label: "指定底面", top: "#f2f2f2", dots: "#ccc", side: "#f09a38" },
];

const distances = [
	{ id: "minClearance", label: "最小安全距离", value: "1.00000", selected: true },
	{ id: "throughClearance", label: "通孔安全距离", value: "1.50000" },
	{ id: "blindStock", label: "盲孔余量", value: "0.00000" },
];

const DrillDialog = () => (
	<Dialog>
		<TitleBar>
			<TitleButton $left aria-label="设置">
				<Gear color="#fff" />
			</TitleButton>
			<h2>点钻 Copy Copy 1 Copy Copy - [3-ZXZ-...</h2>
			<TitleButton aria-label="帮助">
				<svg width="12" height="14" viewBox="0 0 12 14" fill="none" stroke="#fff" strokeWidth="2">
					<path d="M2 4q0-3 4-3t4 3q0 2-4 4v2M6 11v2.500" />
				</svg>
			</TitleButton>
			<TitleButton aria-label="关闭">
				<svg width="12" height="12" viewBox="0 0 12 12" stroke="#fff" strokeWidth="3">
					<path d="M1 1l10 10M11 1L1 11" />
				</svg>
			</TitleButton>
		</TitleBar>
		<DialogBody>
			<Tabs>
				<Tab $active>必用</Tab>
				<Tab>备用</Tab>
			</Tabs>
			<TabPanel>
				<Rows>
					<Row>
						<label htmlFor="geometry">几何体</label>
						<Combo id="geometry" width={116} value="A1" />
						<ToolButton aria-label="新建几何体"><GeometryGlyph /></ToolButton>
						<ToolButton aria-label="编辑几何体"><WrenchGlyph /></ToolButton>
					</Row>
					{planes.map((p) => (
						<Row key={p.label} $low>
							<span>{p.label}</span>
							<ToolButton aria-label={p.label}><Block top={p.top} dots={p.dots} side={p.side} /></ToolButton>
							<ToolButton disabled aria-label="显示"><EyeGlyph /></ToolButton>
						</Row>
					))}
					<Row>
						<label htmlFor="cutter">刀具</label>
						<Combo id="cutter" width={116} value="ZXZ-D3 (铣刀-5" />
						<ToolButton aria-label="新建刀具"><ToolGlyph /></ToolButton>
						<ToolButton aria-label="编辑刀具"><EyeWrenchGlyph /></ToolButton>
					</Row>
				</Rows>
				<BarList $top={1}>
					<Section label="输出" />
					<Section label="换刀设置" />
				</BarList>
				<Rows $top={3}>
					<Row>
						<label htmlFor="cycle">循环</label>
						<Combo id="cycle" width={137} value="标准钻..." />
						<ToolButton aria-label="编辑循环"><WrenchGlyph /></ToolButton>
					</Row>
					{distances.map((d) => (
						<DistanceRow key={d.id}>
							<label htmlFor={d.id}>{d.label}</label>
							<NumberField id={d.id} defaultValue={d.value} $selected={d.selected} />
						</DistanceRow>
					))}
					<Row $mid>
						<span>避让</span>
						<ToolButton aria-label="避让"><AvoidGlyph /></ToolButton>
					</Row>
					<Row $mid>
						<span>进给率和速度</span>
						<ToolButton aria-label="进给率和速度"><FeedGlyph /></ToolButton>
					</Row>
				</Rows>
			</TabPanel>
			<BarList $top={3}>
				<Section label="程序" />
				<Section label="选项" />
				<Section label="操作" open />
			</BarList>
			<Actions>
				<ToolButton aria-label="生成"><GenerateGlyph /></ToolButton>
				<ToolButton disabled aria-label="重播"><GenerateGlyph single /></ToolButton>
				<ToolButton disabled aria-label="确认"><VerifyGlyph /></ToolButton>
				<ToolButton disabled aria-label="列表"><OutputGlyph /></ToolButton>
				<ToolButton $hot aria-label="显示刀轨"><DisplayGlyph /></ToolButton>
			</Actions>
			<Collapse aria-label="收起">
				<svg width="42" height="6" viewBox="0 0 42 6" fill="none" stroke="#000" strokeWidth="2">
					<path d="M1 6l5-4 5 4M16 6l5-4 5 4M31 6l5-4 5 4" />
				</svg>
			</Collapse>
			<Footer>
				<PushButton $primary>确定</PushButton>
				<PushButton>取消</PushButton>
			</Footer>
		</DialogBody>
		<DialogFoot />
	</Dialog>
);

const blankLines = Array.from({ length: 31 }, (_, i) => i);

const OperationNavigator = () => (
	<Navigator>
		<NavHeader>
			<PinBox aria-label="固定" />
			<h2>工序导航器</h2>
		</NavHeader>
		<NavBody>
			<NavTools>
				<ToolButton $hot aria-label="程序顺序视图"><ProgramGlyph /></ToolButton>
				<FlatTool aria-label="机床视图"><ToolGlyph tree /></FlatTool>
				<FlatTool aria-label="几何视图"><GeometryGlyph tree /></FlatTool>
				<FlatTool aria-label="加工方法视图"><MethodGlyph /></FlatTool>
				<ToolButton aria-label="新建窗口"><WindowGlyph /></ToolButton>
				<ToolButton disabled aria-label="删除窗口"><WindowGlyph remove /></ToolButton>
			</NavTools>
			<Sheet>
				<SheetScroll>
					<Table>
						<colgroup>
							<col width="200" />
							<col width="50" />
							<col width="50" />
							<col width="50" />
							<col width="150" />
							<col />
						</colgroup>
						<thead>
							<tr>
								<th>标题</th>
								<th>换刀</th>
								<th>刀轨</th>
								<th>IPW</th>
								<th>通道</th>
								<th>工具</th>
							</tr>
						</thead>
						<tbody>
							<Line>
								<td>
									<TreeCell $indent={4}>
										<Expander />
										<Forbidden />
										<Folder />
										<TreeText>NC_PROGRAM</TreeText>
									</TreeCell>
								</td>
								<td /><td /><td /><td /><td />
							</Line>
							<Line $odd>
								<td>
									<TreeCell>
										<Guide width={38} x={28} />
										<Folder />
										<TreeText>未用项</TreeText>
									</TreeCell>
								</td>
								<td /><td /><td /><td /><td />
							</Line>
							<Line>
								<td>
									<TreeCell $indent={23}>
										<Expander />
										<Forbidden />
										<Folder />
										<TreeText>110</TreeText>
									</TreeCell>
								</td>
								<td /><td /><td /><td /><td />
							</Line>
							<Line $odd>
								<td>
									<TreeCell>
										<Guide width={58} x={47} />
										<Exclaim />
										<EditIcon />
										<TreeText $done>2-ZXZ-D3</TreeText>
									</TreeCell>
								</td>
								<td><ToolMark /></td>
								<td><CheckMark /></td>
								<td><CrossMark /></td>
								<td />
								<td>ZXZ-D3</td>
							</Line>
							<Line $selected>
								<td>
									<TreeCell>
										<Guide width={58} x={47} half />
										<Forbidden />
										<EditIcon />
										<TreeText $selected>3-ZXZ-D3</TreeText>
									</TreeCell>
								</td>
								<td />
								<td><CrossMark /></td>
								<td><CrossMark /></td>
								<td />
								<td>ZXZ-D3</td>
							</Line>
							{blankLines.map((i) => (
								<Line key={i} $odd={i % 2 === 0}>
									<td /><td /><td /><td /><td /><td />
								</Line>
							))}
						</tbody>
					</Table>
				</SheetScroll>
				<ScrollTrack>
					<PlainButton aria-label="向左滚动">
						<svg width="6" height="8" viewBox="0 0 6 8" fill="none" stroke="#444" strokeWidth="1.500">
							<path d="M5 1L1 4l4 3" />
						</svg>
					</PlainButton>
					<span />
				</ScrollTrack>
			</Sheet>
		</NavBody>
	</Navigator>
);

const App = () => (
	<Page>
		<GlobalStyle />
		<Ribbon>
			<RibbonGroup $width={345}>
				<Commands>
					<Cmd label="轨" icon="" $space={-15} />
					<Cmd label="检查刀轨" icon="loop" $space={-9} />
					<Cmd label="有效性报告" />
					<Cmd label="确认刀轨" disabled $space={3} />
					<Cmd label="机床仿真" disabled />
					<Cmd label="后处理" icon="box" disabled />
					<Cmd label="更多" icon="" drop $space={9} />
				</Commands>
				<GroupTitle $end={73}>工序</GroupTitle>
				<Launcher aria-label="工序选项"><Caret color="#444" /></Launcher>
			</RibbonGroup>
			<RibbonGroup $width={315} $pad={9}>
				<Commands $gap={1}>
					<Cmd label="显示刀轨" $pressed />
					<Cmd label="选择刀轨" icon="" $pressed />
					<Cmd label="刀轨报告" icon="box" disabled $space={2} />
					<Playback $gap={13} $start={14}>
						<PlainButton aria-label="刀具显示"><DrillIcon /></PlainButton>
						<Caret />
						<Stack $space={8}>
							<LayersIcon />
							<DownIcon />
						</Stack>
					</Playback>
					<Cmd label="更多" icon="green" drop $space={17} />
				</Commands>
				<GroupTitle $pad={9}>显示</GroupTitle>
				<Launcher aria-label="显示选项"><Caret color="#444" /></Launcher>
			</RibbonGroup>
			<RibbonGroup $width={215} $pad={12}>
				<Playback $gap={9}>
					<PlainButton aria-label="上一步"><Step back /></PlainButton>
					<Caret />
					<PlainButton aria-label="下一步"><Step /></PlainButton>
					<Caret />
					<Stack $height={48} $space={37}>速度</Stack>
				</Playback>
				<GroupTitle $pad={12}>刀轨动画</GroupTitle>
				<Launcher aria-label="动画选项"><Caret color="#444" /></Launcher>
			</RibbonGroup>
			<RibbonGroup $width={133} $pad={12}>
				<Commands>
					<Cmd label="显示 IPW" />
					<Cmd label="分析 IPW" icon="box" drop />
				</Commands>
				<GroupTitle $pad={12}>IPW</GroupTitle>
				<Launcher aria-label="IPW 选项"><Caret color="#444" /></Launcher>
			</RibbonGroup>
			<RibbonGroup $width={195} $pad={13}>
				<Commands>
					<Cmd label="查找特征" disabled />
					<Cmd label="创建特征工艺" disabled />
					<Cmd label="更多" icon="cubes" drop $space={8} />
				</Commands>
				<GroupTitle $pad={13}>特征</GroupTitle>
				<Launcher aria-label="特征选项"><Caret color="#444" /></Launcher>
			</RibbonGroup>
			<RibbonEnd>
				<PlainButton aria-label="功能区选项"><Caret /></PlainButton>
			</RibbonEnd>
		</Ribbon>
		<QuickBar>
			<PlainButton aria-label="点"><CrossesIcon /></PlainButton>
			<QuickDivider />
			<QuickButton $pressed aria-label="MCS 显示"><AxisEye label /></QuickButton>
			<QuickButton aria-label="坐标系显示"><AxisEye /></QuickButton>
			<QuickButton aria-label="隐藏"><HideEye /></QuickButton>
			<QuickDivider />
			<QuickMore aria-label="工具条选项"><Caret /></QuickMore>
		</QuickBar>
		<Work>
			<Left>
				<CanvasColumn>
					<CanvasHeader />
					<Canvas>
						<PartModel />
						<Hud>
							<span>毛坯距离</span><span>0</span><span />
							<HudCheck><input type="checkbox" />在边延伸</HudCheck><span>0</span><span>mm</span>
							<span>切削角</span><span>0</span><span />
							<span>层之间的倾斜...</span><span>0</span><span />
							<span>跨空区域运动...</span><span>跟随</span><span />
							<span>附加刀路数</span><span>-1</span><span />
						</Hud>
					</Canvas>
				</CanvasColumn>
				<SideStrip>
					<RulerCorner><RulerIcon /></RulerCorner>
					<StripArrow aria-label="展开">
						<svg width="4" height="6" viewBox="0 0 4 6"><path d="M4 0v6L0 3z" /></svg>
					</StripArrow>
				</SideStrip>
				<DrillDialog />
			</Left>
			<OperationNavigator />
			<Rail>
				<RailGear aria-label="资源条选项"><Gear color="#111" /></RailGear>
				{railTabs.map(([name, label, space]) => (
					<RailTab key={name} $active={name === "operations"} $space={space} aria-label={label}>
						<svg width="25" height="28" viewBox="0 0 25 28" fill="none" stroke="#444" strokeLinejoin="round">
							{railArt[name]}
						</svg>
					</RailTab>
				))}
			</Rail>
		</Work>
		<StatusBar><span /></StatusBar>
		<Alert role="alert">
			<AlertGrip>
				<svg width="8" height="68" viewBox="0 0 8 68" stroke="#999" strokeWidth="2" strokeDasharray="2 2">
					<path d="M1 0v68M5 0v68" />
				</svg>
			</AlertGrip>
			<AlertBox>
				<h3>警报</h3>
				<div>
					<svg width="23" height="23" viewBox="0 0 23 23">
						<circle cx="11.500" cy="11.500" r="11" fill="#4f9fb8" stroke="#1a6682" />
						<path d="M11.500 8v10M11.500 4.500v2" stroke="#fff" />
					</svg>
					<p>进给和速度必须通过选择其中一个计算器按钮来更新。</p>
				</div>
			</AlertBox>
			<AlertClose aria-label="关闭">
				<svg width="14" height="14" viewBox="0 0 14 14" stroke="#dc2028" strokeWidth="3.500">
					<path d="M2 2l10 10M12 2L2 12" />
				</svg>
			</AlertClose>
		</Alert>
		<Annotations fill="#fb5452">
			<path d="M822 453l1 1L573 693l4 4-26 10 12-25 5 5z" />
			<path d="M943 543h2l173 290 6-4 4 28-22-17 6-2z" />
		</Annotations>
		<Watermark>UG<b>爱好者论坛</b> WWW.UGSNX.COM</Watermark>
	</Page>
);

export default App;
